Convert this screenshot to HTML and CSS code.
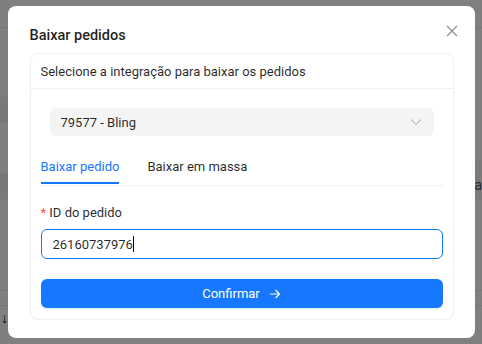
FILE: index.html
```html
<!DOCTYPE html>
<html lang="pt-BR">
<head>
    <meta charset="UTF-8">
    <meta name="viewport" content="width=device-width, initial-scale=1.0">
    <title>Baixar pedidos</title>
    <link rel="stylesheet" href="styles.css">
</head>
<body>

    <div class="page">
        <div class="page-top"></div>
        <div class="page-block block-one"></div>
        <div class="page-block block-two"></div>
        <div class="page-side">a</div>
        <div class="page-line line-one"></div>
        <div class="page-line line-two"><span class="page-arrow">&#8595;</span></div>
    </div>

    <div class="overlay">
        <div class="modal">
            <div class="modal-head">
                <h2>Baixar pedidos</h2>
                <button class="close" aria-label="Fechar">
                    <svg width="12" height="12" viewBox="0 0 12 12">
                        <path d="M1 1L11 11M11 1L1 11" stroke="#8c8c8c" stroke-width="1.2" fill="none"/>
                    </svg>
                </button>
            </div>

            <div class="card">
                <div class="card-head">Selecione a integração para baixar os pedidos</div>
                <div class="card-body">
                    <div class="select">
                        <span>79577 - Bling</span>
                        <svg width="12" height="8" viewBox="0 0 12 8">
                            <path d="M1 1.5L6 6.5L11 1.5" stroke="#c4c4c4" stroke-width="1.2" fill="none"/>
                        </svg>
                    </div>

                    <div class="tabs">
                        <div class="tab active">Baixar pedido</div>
                        <div class="tab">Baixar em massa</div>
                    </div>

                    <label class="field-label" for="pedido"><span class="req">*</span> ID do pedido</label>
                    <div class="input">26160737976<span class="caret"></span></div>

                    <button class="confirm">
                        Confirmar
                        <svg width="12" height="12" viewBox="0 0 12 12">
                            <path d="M1 6H10.5M6.5 2L10.5 6L6.5 10" stroke="#fff" stroke-width="1.2" fill="none"/>
                        </svg>
                    </button>
                </div>
            </div>
        </div>
    </div>

</body>
</html>
```

FILE: styles.css
```css
body {
    margin: 0;
    font-family: Roboto, "Open Sans", sans-serif;
    width: 482px;
    height: 344px;
    overflow: hidden;
    position: relative;
    background: #ffffff;
    color: rgba(0, 0, 0, 0.85);
}
.page {
    height: 100%;
    display: flex;
    flex-direction: column;
}
.page-top {
    height: 27px;
    border-bottom: 1px solid #ebebeb;
}
.page-block {
    width: 12px;
    height: 27px;
    background: #f2f2f2;
    border-radius: 0 6px 6px 0;
}
.block-one {
    margin-top: 68px;
}
.block-two {
    margin-top: 50px;
}
.page-side {
    position: absolute;
    right: 0;
    top: 160px;
    width: 8px;
    height: 40px;
    background: #f5f5f5;
    font-size: 14px;
    line-height: 50px;
    color: #555;
    text-align: right;
}
.page-line {
    height: 14px;
    border-top: 1px solid #e6e6e6;
}
.line-one {
    margin-top: 90px;
}
.page-arrow {
    display: block;
    font-size: 14px;
    line-height: 24px;
    color: #000;
    margin-left: 1px;
}
.overlay {
    position: fixed;
    inset: 0;
    background: rgba(0, 0, 0, 0.5);
    display: flex;
    align-items: center;
    justify-content: center;
}
.modal {
    width: 467px;
    height: 332px;
    box-sizing: border-box;
    background: #ffffff;
    border-radius: 8px;
    padding: 19px 17px 0 22px;
}
.modal-head {
    display: flex;
    justify-content: space-between;
    align-items: flex-start;
    height: 28px;
}
h2 {
    margin: 1px 0 0 0;
    font-size: 14.5px;
    font-weight: 500;
    line-height: 20px;
    color: rgba(0, 0, 0, 0.88);
}
.close {
    border: none;
    background: none;
    padding: 0;
    width: 12px;
    height: 12px;
    cursor: pointer;
}
.close svg {
    display: block;
}
.card {
    border: 1px solid #f0f0f0;
    border-radius: 8px;
    height: 267px;
    width: 424px;
    box-sizing: border-box;
}
.card-head {
    height: 34px;
    border-bottom: 1px solid #f0f0f0;
    padding: 0 10px;
    font-size: 13px;
    line-height: 35px;
}
.card-body {
    padding: 19px 10px 0 10px;
}
.select {
    margin: 0 9px;
    height: 28px;
    background: #f4f4f4;
    border-radius: 6px;
    display: flex;
    align-items: center;
    justify-content: space-between;
    padding: 0 12px 0 11px;
    font-size: 13px;
}
.tabs {
    display: flex;
    gap: 28px;
    border-bottom: 1px solid #f0f0f0;
    margin-top: 15px;
    height: 34px;
}
.tab {
    font-size: 13px;
    line-height: 31px;
    height: 33px;
    box-sizing: border-box;
}
.tab.active {
    color: #1677ff;
    border-bottom: 2px solid #1677ff;
}
.field-label {
    display: block;
    margin-top: 16px;
    font-size: 13px;
    line-height: 22px;
}
.req {
    color: #ff4d4f;
}
.input {
    margin-top: 5px;
    height: 30px;
    box-sizing: border-box;
    border: 1px solid #1677ff;
    border-radius: 6px;
    padding: 0 11px;
    font-size: 13px;
    display: flex;
    align-items: center;
}
.caret {
    width: 1px;
    height: 16px;
    background: #000;
}
.confirm {
    margin-top: 20px;
    width: 100%;
    height: 29px;
    background: #1677ff;
    color: #ffffff;
    border: none;
    border-radius: 6px;
    font-family: inherit;
    font-size: 13px;
    display: flex;
    align-items: center;
    justify-content: center;
    gap: 9px;
    box-shadow: 0 2px 0 rgba(5, 145, 255, 0.1);
    cursor: pointer;
}
```
